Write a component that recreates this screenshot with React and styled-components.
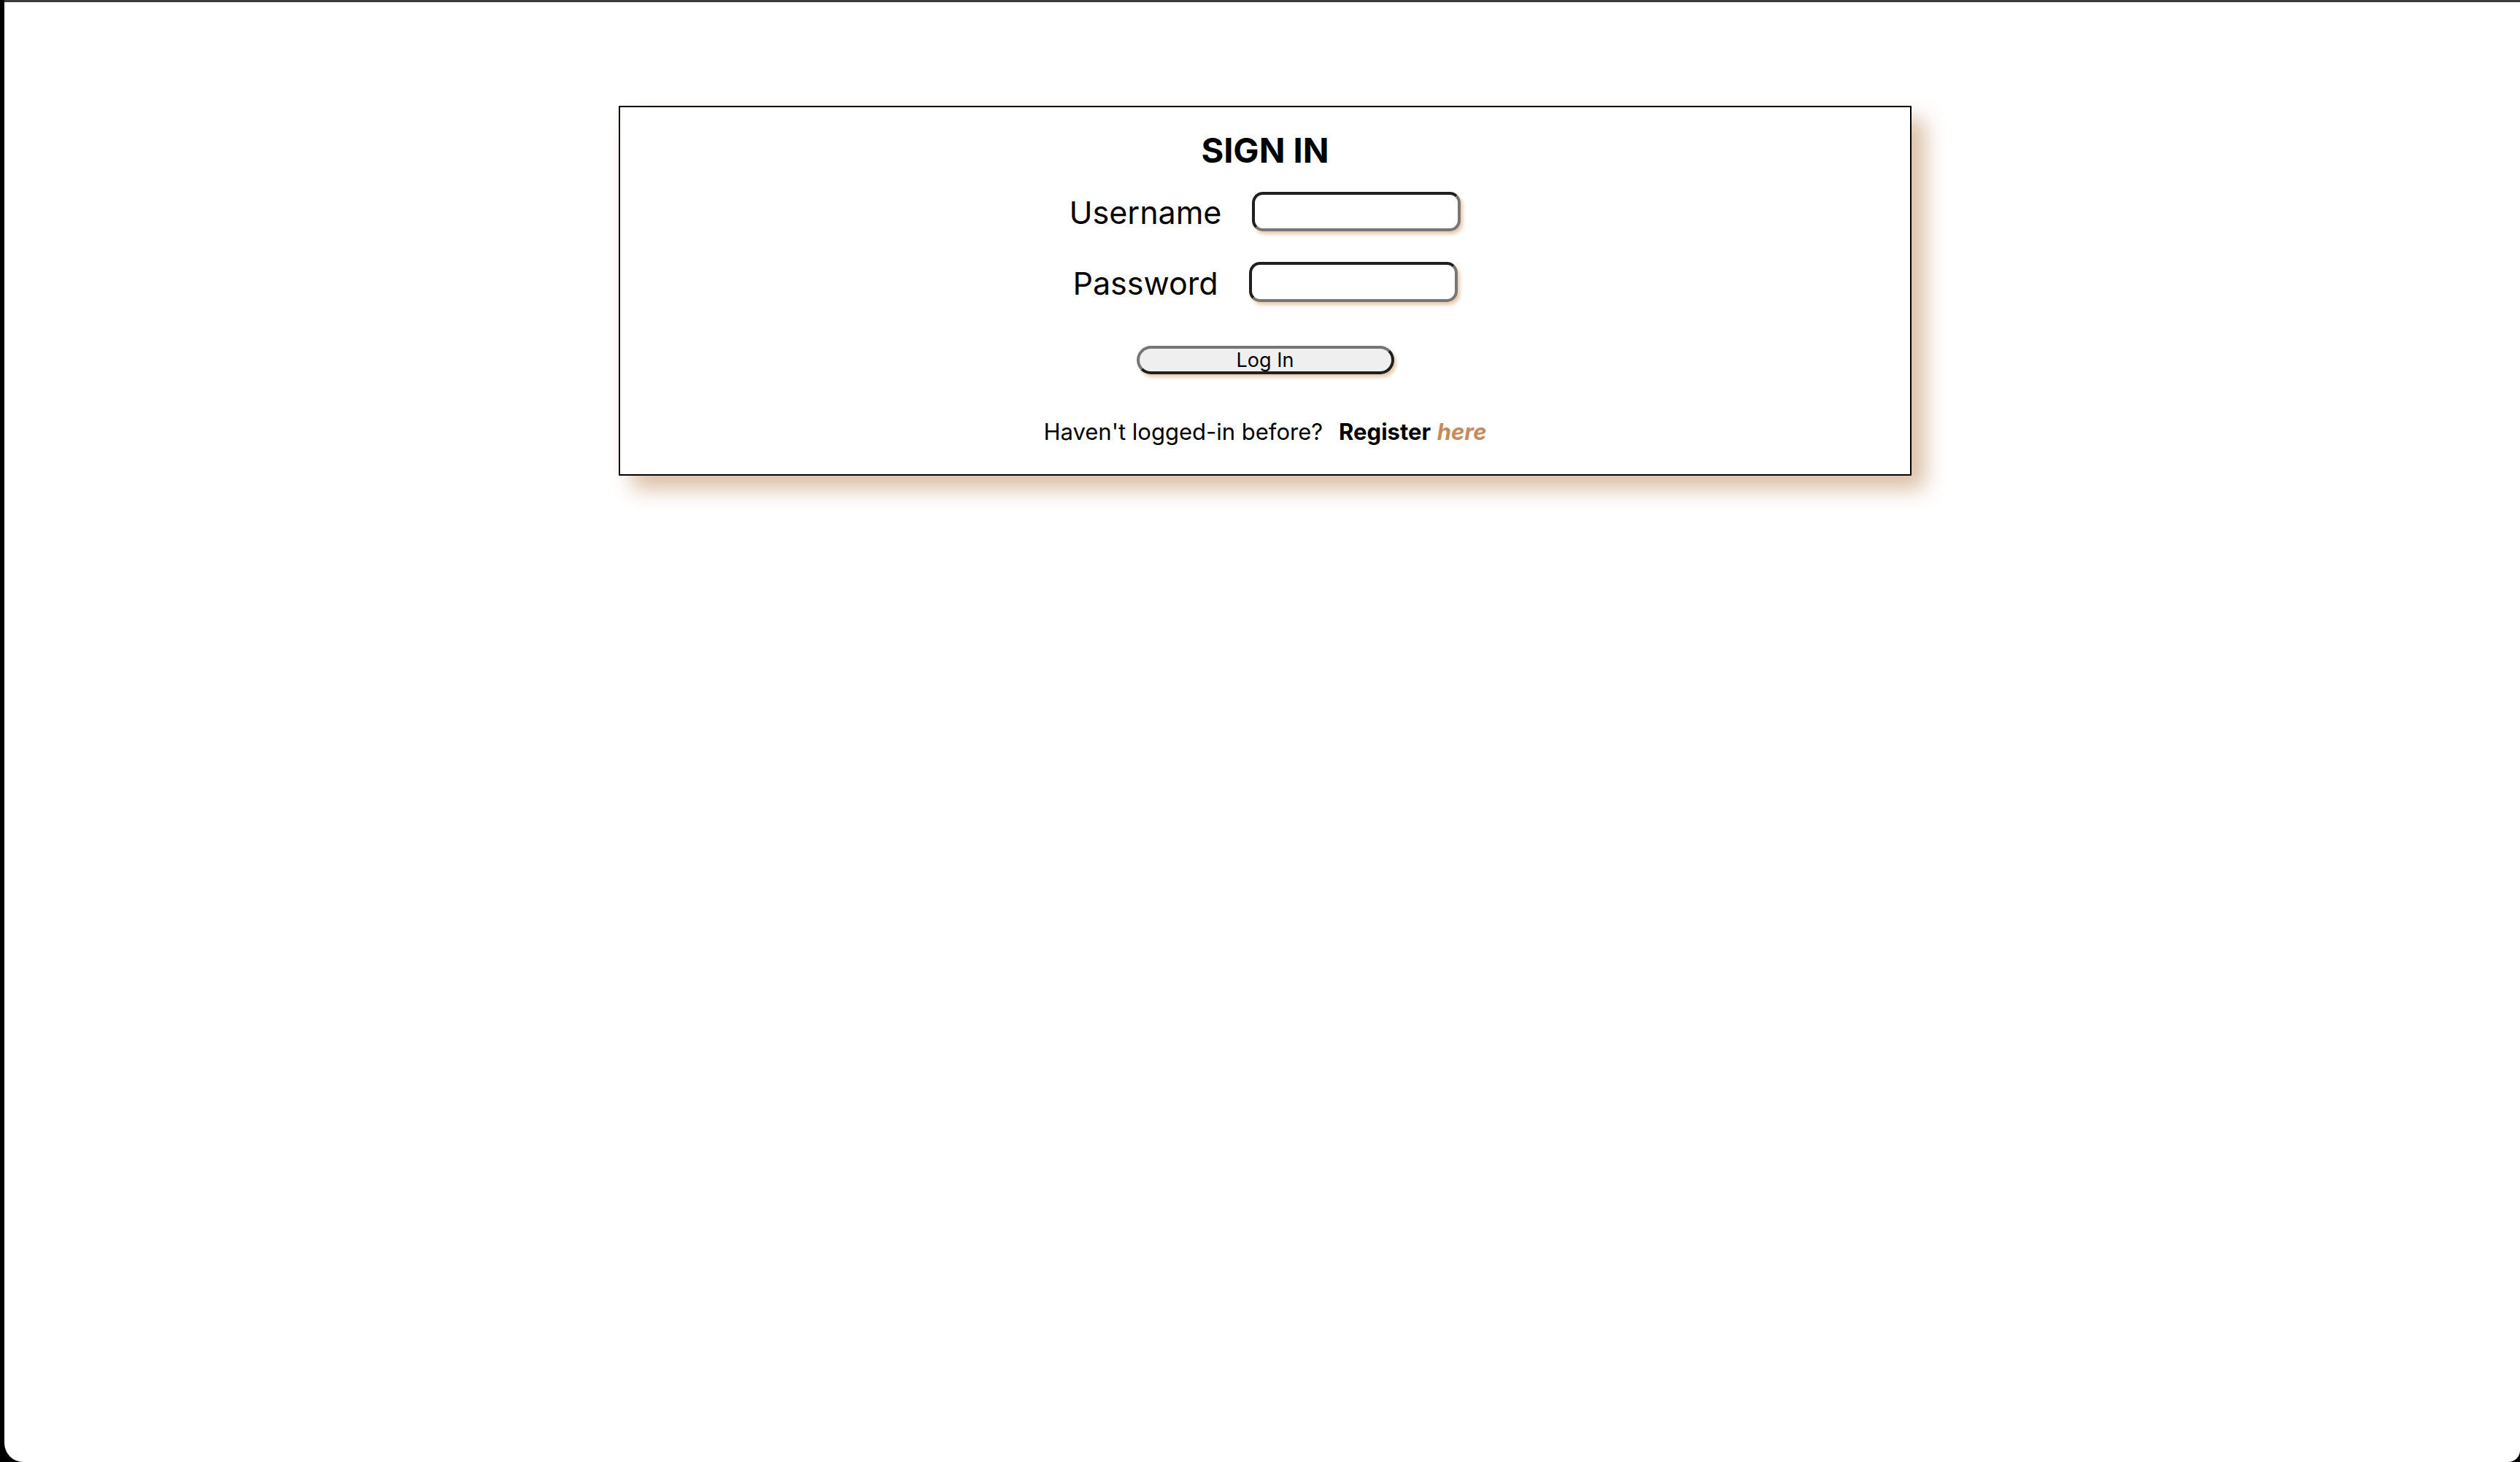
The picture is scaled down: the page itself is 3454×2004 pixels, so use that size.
import styled, { createGlobalStyle } from 'styled-components';

const GlobalStyle = createGlobalStyle`
  html {
    background: #000;
  }
  body {
    margin: 0;
    background: #000;
    font-family: Inter, "Noto Sans", sans-serif;
    color: #000;
  }
`;

// window frame: white sheet with a dark top edge, rounded at the bottom
const Frame = styled.div`
  box-sizing: border-box;
  min-height: 100vh;
  margin-left: 6px;
  background: #fff;
  border-top: 3px solid #3c3c3c;
  border-radius: 0 0 16px 26px;
  padding: 142px 0 0 8px;
  display: flex;
  flex-direction: column;
  align-items: center;
`;

const Card = styled.section`
  box-sizing: border-box;
  width: 1772px;
  border: 2px solid #000;
  background: #fff;
  box-shadow: 18px 18px 28px #dbbea4;
  padding: 30px 0 40px;
  display: flex;
  flex-direction: column;
  align-items: center;
`;

const Title = styled.h1`
  margin: 0 0 28px;
  font-size: 47px;
  line-height: 58px;
  font-weight: 700;
`;

const Field = styled.div`
  display: flex;
  align-items: flex-end;
  gap: 42px;
  margin-bottom: ${({ $last }) => ($last ? '60px' : '42px')};
`;

const Label = styled.label`
  font-size: 43px;
  font-weight: 400;
`;

const Input = styled.input`
  box-sizing: border-box;
  width: 286px;
  height: ${({ $h }) => $h || '54px'};
  border-width: 4px;
  border-style: solid;
  border-color: #1f1f1f #767676 #767676 #1f1f1f;
  border-radius: 15px;
  background: #fff;
  box-shadow: 3px 4px 5px #e6c9ad;
  outline: none;
  padding: 0 12px;
  font-size: 26px;
`;

const Button = styled.button`
  box-sizing: border-box;
  width: 353px;
  height: 39px;
  border-width: 4px;
  border-style: solid;
  border-color: #767676 #1f1f1f #1f1f1f #767676;
  border-radius: 20px;
  background: #efefef;
  box-shadow: 3px 4px 5px #e6c9ad;
  font-family: Inter, "Noto Sans", sans-serif;
  font-size: 27px;
  line-height: 1;
  color: #000;
  padding: 0;
  margin-bottom: 60px;
`;

const Footer = styled.p`
  margin: 0;
  font-size: 31px;
`;

const Register = styled.strong`
  margin-left: 22px;
  font-weight: 700;
`;

const Here = styled.a`
  font-weight: 700;
  font-style: italic;
  color: #c38b5e;
  text-decoration: none;
`;

export default function App() {
  return (
    <>
      <GlobalStyle />
      <Frame>
        <Card>
          <Title>SIGN IN</Title>
          <Field>
            <Label htmlFor='username'>Username</Label>
            <Input id='username' type='text' />
          </Field>
          <Field $last>
            <Label htmlFor='password'>Password</Label>
            <Input id='password' type='password' $h='55px' />
          </Field>
          <Button type='button'>Log In</Button>
          <Footer>
            Haven't logged-in before?
            <Register>Register</Register> <Here href='#'>here</Here>
          </Footer>
        </Card>
      </Frame>
    </>
  );
}
